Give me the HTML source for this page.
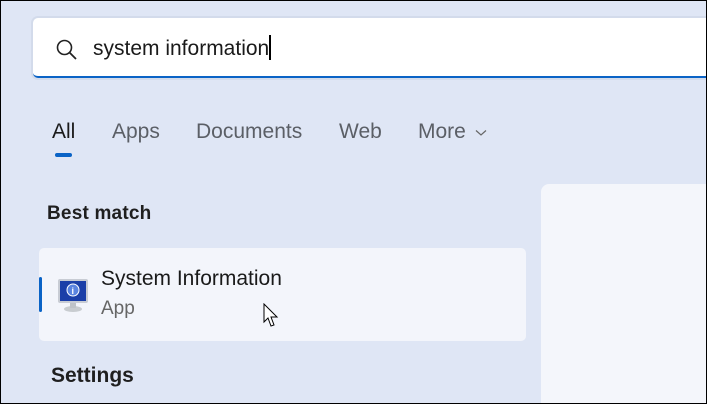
<!DOCTYPE html>
<html><head><style>
body{margin:0;width:707px;height:404px;overflow:hidden;background:#000;font-family:"Liberation Sans",sans-serif}
#w{position:absolute;left:1px;top:1px;width:705px;height:402px;background:#dfe6f5;overflow:hidden}
.sb{position:absolute;left:32px;top:17px;width:700px;height:58px;background:#fff;border-radius:5px;border-bottom:2px solid #0a63c6;box-shadow:0 0 0 2px #d3dbeb}
.q{position:absolute;left:60px;top:17px;font-size:21px;color:#1a1a1a}
.t{position:absolute;top:119px;font-size:21px;color:#5b5f66}
</style></head><body><div id="w">
<div class="sb">
<svg style="position:absolute;left:22px;top:20px" width="24" height="24" viewBox="0 0 24 24"><circle cx="9.5" cy="9.5" r="7" fill="none" stroke="#222" stroke-width="1.6"/><line x1="14.5" y1="14.5" x2="21" y2="21" stroke="#222" stroke-width="1.8"/></svg>
<div class="q">system information<span style="display:inline-block;width:2px;height:25px;background:#000;vertical-align:-5px"></span></div>
</div>
<div class="t" style="left:51px;color:#1a1a1a">All</div>
<div style="position:absolute;left:54px;top:152px;width:17px;height:4px;border-radius:2px;background:#0a63c6"></div>
<div class="t" style="left:111px">Apps</div>
<div class="t" style="left:195px">Documents</div>
<div class="t" style="left:338px">Web</div>
<div class="t" style="left:417px">More</div>
<svg style="position:absolute;left:474px;top:128px" width="12" height="8" viewBox="0 0 12 8"><path d="M1 1.5 L6 6 L11 1.5" fill="none" stroke="#666" stroke-width="1.2"/></svg>
<div style="position:absolute;left:46px;top:202px;font-size:19px;font-weight:bold;color:#1f1f1f;letter-spacing:0.2px">Best match</div>
<div style="position:absolute;left:38px;top:247px;width:487px;height:93px;background:#f3f5fb;border-radius:5px"></div>
<div style="position:absolute;left:38px;top:276px;width:3px;height:35px;background:#0a63c6;border-radius:2px"></div>
<svg style="position:absolute;left:55px;top:276px" width="34" height="36" viewBox="0 0 34 36">
<rect x="2" y="2" width="30" height="24" rx="2" fill="#c8ccd4"/><rect x="4" y="4" width="26" height="20" fill="#1b3fa8"/><circle cx="17" cy="13" r="6" fill="#5a84e0" stroke="#fff" stroke-width="1"/><text x="15.5" y="17" font-size="9" fill="#fff" font-weight="bold">i</text><ellipse cx="17" cy="32" rx="9" ry="3" fill="#c8ccd0"/><rect x="14" y="26" width="6" height="5" fill="#bfc3c8"/></svg>
<div style="position:absolute;left:100px;top:266px;font-size:21px;color:#1a1a1a">System Information</div>
<div style="position:absolute;left:100px;top:297px;font-size:19px;color:#666">App</div>
<svg style="position:absolute;left:262px;top:302px" width="20" height="26" viewBox="0 0 20 26"><path d="M1 1 L1 19 L5 15 L8 23 L11 22 L8 14 L14 14 Z" fill="#fff" stroke="#000" stroke-width="1"/></svg>
<div style="position:absolute;left:50px;top:363px;font-size:21px;font-weight:bold;color:#1f1f1f">Settings</div>
<div style="position:absolute;left:540px;top:183px;width:180px;height:219px;background:#f4f6fb;border-radius:8px 0 0 0"></div>
</div></body></html>
